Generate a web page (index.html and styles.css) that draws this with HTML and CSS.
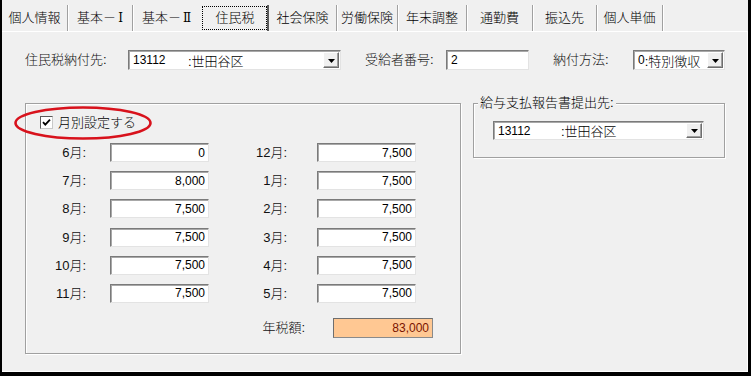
FILE: index.html
```html
<!DOCTYPE html>
<html lang="ja">
<head>
<meta charset="utf-8">
<title>住民税</title>
<link rel="stylesheet" href="styles.css">
</head>
<body>
<div class="window">
  <div class="tabs">
    <div class="tab t1">個人情報</div>
    <div class="tab t2">基本－<span class="roman">Ⅰ</span></div>
    <div class="tab t3">基本－<span class="roman">Ⅱ</span></div>
    <div class="tab active"><div class="focus">住民税</div></div>
    <div class="tab t5">社会保険</div>
    <div class="tab t6">労働保険</div>
    <div class="tab t7">年末調整</div>
    <div class="tab t8">通勤費</div>
    <div class="tab t9">振込先</div>
    <div class="tab t10">個人単価</div>
  </div>
  <div class="page">
    <div class="row1">
      <span class="lbl lbl-dest">住民税納付先:</span>
      <div class="combo combo-dest">
        <span class="val"><span class="code code-dest">13112</span>:世田谷区</span>
        <span class="drop"><svg width="7" height="4" viewBox="0 0 7 4"><polygon points="0,0 7,0 3.5,4" fill="#000"/></svg></span>
      </div>
      <span class="lbl lbl-recv">受給者番号:</span>
      <div class="field field-recv"><span class="num">2</span></div>
      <span class="lbl lbl-method">納付方法:</span>
      <div class="combo combo-method">
        <span class="val"><span class="num">0</span>:特別徴収</span>
        <span class="drop"><svg width="7" height="4" viewBox="0 0 7 4"><polygon points="0,0 7,0 3.5,4" fill="#000"/></svg></span>
      </div>
    </div>

    <div class="groups">
      <div class="group monthly">
        <svg class="ring" width="140" height="36" viewBox="0 0 140 36"><ellipse cx="69" cy="17" rx="67.5" ry="15.5" fill="none" stroke="#d8121c" stroke-width="2.6"/></svg>
        <div class="check-row">
          <span class="checkbox"><svg width="11" height="11" viewBox="0 0 11 11"><path d="M2 5.2 L4.3 7.6 L9 2.6" fill="none" stroke="#000" stroke-width="1.8"/></svg></span>
          <span class="check-label">月別設定する</span>
        </div>
        <div class="months">
          <span class="mlbl">6月:</span><div class="field amount">0</div>
          <span class="mlbl r">12月:</span><div class="field amount">7,500</div>
          <span class="mlbl">7月:</span><div class="field amount">8,000</div>
          <span class="mlbl r">1月:</span><div class="field amount">7,500</div>
          <span class="mlbl">8月:</span><div class="field amount">7,500</div>
          <span class="mlbl r">2月:</span><div class="field amount">7,500</div>
          <span class="mlbl">9月:</span><div class="field amount">7,500</div>
          <span class="mlbl r">3月:</span><div class="field amount">7,500</div>
          <span class="mlbl">10月:</span><div class="field amount">7,500</div>
          <span class="mlbl r">4月:</span><div class="field amount">7,500</div>
          <span class="mlbl">11月:</span><div class="field amount">7,500</div>
          <span class="mlbl r">5月:</span><div class="field amount">7,500</div>
        </div>
        <div class="total-row">
          <span class="total-lbl">年税額:</span>
          <div class="total">83,000</div>
        </div>
      </div>

      <div class="group report">
        <span class="legend">給与支払報告書提出先:</span>
        <div class="combo combo-report">
          <span class="val"><span class="code code-report">13112</span>:世田谷区</span>
          <span class="drop"><svg width="7" height="4" viewBox="0 0 7 4"><polygon points="0,0 7,0 3.5,4" fill="#000"/></svg></span>
        </div>
      </div>
    </div>
  </div>
</div>
</body>
</html>
```

FILE: styles.css
```css
* { box-sizing: border-box; }
html, body { margin: 0; padding: 0; }
body {
  font-family: "Liberation Sans", "Noto Sans CJK JP", sans-serif;
  font-size: 13px;
  font-weight: 300;
  color: #000;
  background: #f0f0f0;
}
.window {
  width: 751px;
  height: 376px;
  border-left: 2px solid #000;
  border-right: 3px solid #000;
  border-bottom: 4px solid #000;
  background: #f0f0f0;
  display: flex;
  flex-direction: column;
}

/* tabs */
.tabs {
  height: 31px;
  display: flex;
  align-items: flex-end;
}
.tab {
  height: 26px;
  display: flex;
  align-items: center;
  justify-content: center;
  line-height: 16px;
  white-space: nowrap;
  border-right: 1px solid #a0a0a0;
  box-shadow: 1px 0 0 #fff;
}
.roman { font-family: "DejaVu Serif", "Noto Sans CJK JP", serif; font-size: 12px; margin-left: 2px; }
.t1 { width: 66px; }
.t2 { width: 65px; }
.t3 { width: 67px; border-right: none; box-shadow: none; }
.active {
  width: 69px;
  border-right: 2px solid #5a5a5a;
  padding: 1px 0 1px 2px;
  box-shadow: none;
}
.focus {
  width: 100%;
  height: 100%;
  border: 1px dotted #000;
  display: flex;
  align-items: center;
  justify-content: center;
  padding-left: 1px;
}
.t5 { width: 68px; }
.t6 { width: 61px; }
.t7 { width: 69px; }
.t8 { width: 66px; }
.t9 { width: 64px; }
.t10 { width: 66px; }

/* page */
.page {
  flex: 1;
  border-top: 1px solid #fff;
  border-right: 1px solid #fff;
  border-bottom: 1px solid #fff;
}
.row1 {
  display: flex;
  align-items: center;
  height: 20px;
  margin-top: 18px;
  padding-left: 23px;
}
.lbl { line-height: 20px; white-space: nowrap; color: #111; }
.lbl-dest { width: 103px; }
.lbl-recv { width: 81px; margin-left: 24px; }
.lbl-method { width: 80px; margin-left: 24px; }

.field {
  background: #fff;
  border: 1px solid;
  border-color: #7a7a7a #e3e3e3 #e3e3e3 #7a7a7a;
  box-shadow: inset 1px 1px 0 #a8a8a8;
  height: 20px;
  display: flex;
  align-items: center;
  padding: 0 3px 0 4px;
  font-size: 12px;
}
.field-recv { width: 83px; }

.combo {
  background: #fff;
  border: 1px solid;
  border-color: #7a7a7a #e3e3e3 #e3e3e3 #7a7a7a;
  box-shadow: inset 1px 1px 0 #a8a8a8;
  height: 20px;
  display: flex;
  align-items: center;
  justify-content: space-between;
  padding: 0 1px 0 4px;
}
.combo-dest { width: 213px; }
.combo-method { width: 92px; }
.combo-report { width: 211px; height: 19px; }
.val { display: flex; align-items: center; white-space: nowrap; }
.code { font-size: 12px; }
.num { font-size: 12px; }
.code-dest { width: 55px; }
.code-report { width: 63px; }
.drop {
  width: 16px;
  height: 16px;
  background: #f0f0f0;
  border: 1px solid;
  border-color: #fff #6e6e6e #6e6e6e #fff;
  box-shadow: inset -1px -1px 0 #a0a0a0;
  display: flex;
  align-items: center;
  justify-content: center;
  padding-top: 1px;
}
.combo-report .drop { height: 15px; }

/* groups */
.groups {
  display: flex;
  align-items: flex-start;
  margin-top: 33px;
  padding-left: 23px;
}
.group {
  position: relative;
  border: 1px solid #a0a0a0;
  box-shadow: 1px 1px 0 #fff, inset 1px 1px 0 #fff;
}
.monthly {
  width: 436px;
  height: 251px;
  padding-top: 12px;
}
.ring {
  position: absolute;
  left: -12px;
  top: 2px;
}
.check-row {
  display: flex;
  align-items: center;
  height: 13px;
  margin-left: 14px;
}
.checkbox {
  width: 13px;
  height: 13px;
  background: #fff;
  border: 1px solid;
  border-color: #5a5a5a #c8c8c8 #c8c8c8 #5a5a5a;
  display: flex;
  align-items: center;
  justify-content: center;
}
.check-label { margin-left: 5px; line-height: 16px; white-space: nowrap; }

.months {
  display: grid;
  grid-template-columns: 84px 99px 108px 99px;
  grid-auto-rows: 19px;
  row-gap: 9.2px;
  margin-top: 14px;
}
.mlbl {
  text-align: right;
  padding-right: 24px;
  line-height: 19px;
  white-space: nowrap;
  color: #111;
}
.mlbl.r { padding-right: 30px; }
.amount {
  height: 19px;
  justify-content: flex-end;
}

.total-row {
  display: flex;
  align-items: center;
  margin-top: 15px;
  height: 20px;
}
.total-lbl {
  width: 279px;
  text-align: right;
  line-height: 20px;
  color: #111;
}
.total {
  margin-left: 28px;
  width: 100px;
  height: 20px;
  background: #ffc893;
  border: 1px solid;
  border-color: #6e6e6e #8a8a8a #8a8a8a #6e6e6e;
  display: flex;
  align-items: center;
  justify-content: flex-end;
  padding-right: 3px;
  font-size: 12px;
  color: #7a1400;
}

.report {
  width: 252px;
  height: 55px;
  margin-left: 12px;
  padding: 17px 0 0 19px;
}
.legend {
  position: absolute;
  left: 4px;
  top: -9px;
  padding: 0 2px;
  background: #f0f0f0;
  line-height: 16px;
  white-space: nowrap;
}
```
